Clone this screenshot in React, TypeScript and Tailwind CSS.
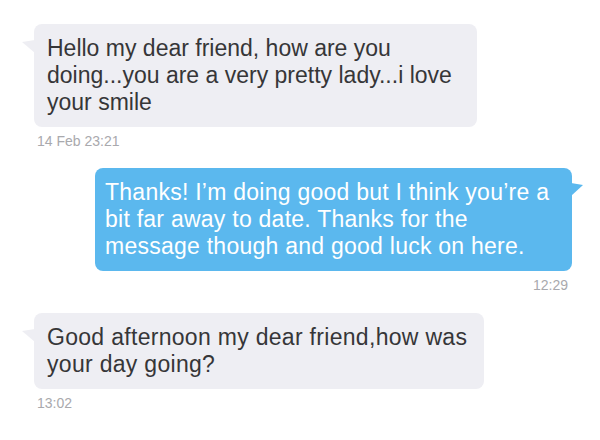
const font = { fontFamily: '"Liberation Sans", Arial, sans-serif' }

function Received({ lines, width, time, tracking }: { lines: string[]; width: string; time: string; tracking: string }) {
  return (
    <div className="pl-[34px]">
      <div className={`relative rounded-[8px] bg-[#eeeef3] py-[11px] pl-[13px] pr-[8px] text-[23px] leading-[27px] whitespace-nowrap text-[#363638] ${width} ${tracking}`}>
        <svg className="absolute left-[-12px] top-[16px]" width="13" height="13" viewBox="0 0 13 13">
          <path d="M0 2 L13 0 L13 13 Z" fill="#eeeef3" />
        </svg>
        {lines.map((l) => (
          <div key={l}>{l}</div>
        ))}
      </div>
      <p className="mt-[6px] pl-[3px] text-[14px] leading-[16px] text-[#a9a9ad]">{time}</p>
    </div>
  )
}

export default function App() {
  return (
    <div className="h-[440px] w-[600px] overflow-hidden bg-white pt-[24px]" style={font}>
      <Received
        width="w-[443px]"
        tracking="tracking-normal"
        lines={['Hello my dear friend, how are you', 'doing...you are a very pretty lady...i love', 'your smile']}
        time="14 Feb 23:21"
      />

      <div className="mt-[19px] flex flex-col items-end pr-[28px]">
        <div className="relative w-[477px] whitespace-nowrap rounded-[8px] bg-[#5bb8ee] py-[11px] pl-[10px] pr-[8px] text-[23px] leading-[27px] tracking-[0.25px] text-white">
          <svg className="absolute right-[-11px] top-[15px]" width="12" height="13" viewBox="0 0 12 13">
            <path d="M0 0 L12 2 L0 13 Z" fill="#5bb8ee" />
          </svg>
          <div>Thanks! I’m doing good but I think you’re a</div>
          <div>bit far away to date. Thanks for the</div>
          <div>message though and good luck on here.</div>
        </div>
        <p className="mt-[6px] pr-[4px] text-[14px] leading-[16px] text-[#a9a9ad]">12:29</p>
      </div>

      <div className="mt-[20px]">
        <Received
          width="w-[450px]"
          tracking="tracking-[0.3px]"
          lines={['Good afternoon my dear friend,how was', 'your day going?']}
          time="13:02"
        />
      </div>
    </div>
  )
}
